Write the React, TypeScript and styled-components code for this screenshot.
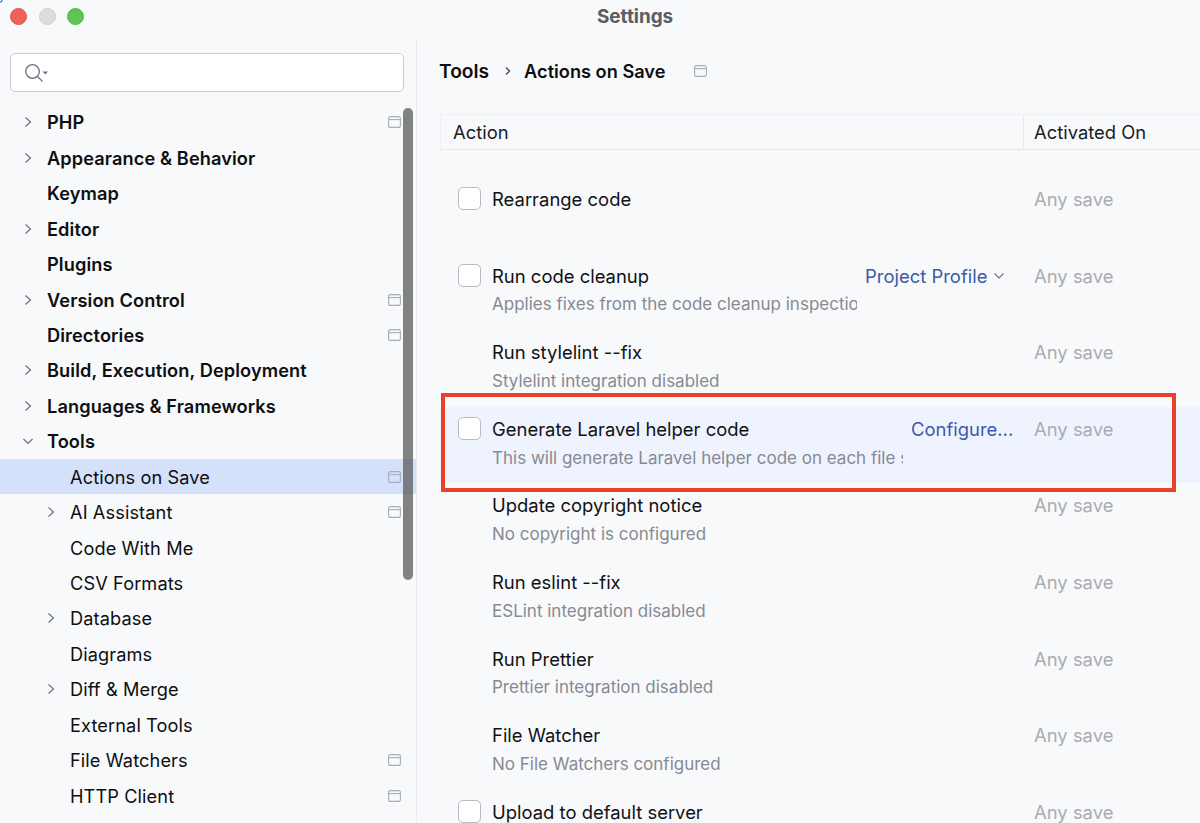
import React from "react";
import styled, { createGlobalStyle } from "styled-components";

const Global = createGlobalStyle`
  html, body { margin: 0; padding: 0; background: #f8f9fb; }
  body { font-family: Inter, "Liberation Sans", sans-serif; color: #111; overflow: hidden; }
`;

const Window = styled.div`
  position: relative;
  width: 1200px;
  height: 823px;
  overflow: hidden;
  background: #f8f9fb;
  display: flex;
  flex-direction: column;
`;

const CornerArc = styled.span`
  position: absolute;
  left: -5px;
  top: -5px;
  width: 8px;
  height: 8px;
  box-sizing: border-box;
  border: 1.5px solid #2b3f8f;
  border-radius: 50%;
`;

const TitleBar = styled.header`
  position: relative;
  height: 38px;
  flex: none;
  display: flex;
  align-items: flex-start;
  padding: 8px 0 0 10px;
  box-sizing: border-box;
  gap: 11.5px;
`;

const Light = styled.span<{ $c: string; $b: string }>`
  width: 17px;
  height: 17px;
  border-radius: 50%;
  background: ${(p) => p.$c};
  border: 1px solid ${(p) => p.$b};
  box-sizing: border-box;
`;

const Title = styled.div`
  position: absolute;
  left: 597px;
  top: 6px;
  font-size: 18.9px;
  line-height: 22px;
  font-weight: 700;
  color: #5c5d62;
`;

const Body = styled.div`
  flex: 1;
  display: flex;
  min-height: 0;
`;

const Sidebar = styled.aside`
  position: relative;
  width: 417px;
  flex: none;
  box-sizing: border-box;
  border-right: 1px solid #ebecf0;
  padding-top: 15px;
`;

const Search = styled.div`
  margin: 0 12px 0 10px;
  height: 39px;
  box-sizing: border-box;
  background: #fff;
  border: 1.5px solid #c9ccd6;
  border-radius: 5px;
  display: flex;
  align-items: center;
  padding-left: 13px;
`;

const Tree = styled.ul`
  list-style: none;
  margin: 12.6px 0 0;
  padding: 0;
`;

const Row = styled.li<{ $sel?: boolean }>`
  position: relative;
  height: 35.45px;
  display: flex;
  align-items: center;
  background: ${(p) => (p.$sel ? "#d5e1fb" : "transparent")};
`;

const Arrow = styled.span<{ $level: number }>`
  width: 14px;
  height: 14px;
  flex: none;
  margin-left: ${(p) => (p.$level ? 44 : 21)}px;
  margin-right: 12px;
  display: flex;
  align-items: center;
  justify-content: center;
`;

const Label = styled.span<{ $bold?: boolean }>`
  font-size: 18.2px;
  letter-spacing: 0.1px;
  font-weight: ${(p) => (p.$bold ? 600 : 400)};
  color: #0e0f11;
  white-space: nowrap;
`;

const ProjectMark = styled.svg`
  position: absolute;
  right: 15px;
  top: 50%;
  margin-top: -6px;
  width: 13px;
  height: 12px;
`;

const Scrollbar = styled.div`
  position: absolute;
  left: 403px;
  top: 70px;
  width: 10px;
  height: 472px;
  border-radius: 5px;
  background: rgba(90, 90, 90, 0.75);
`;

const Main = styled.main`
  flex: 1;
  min-width: 0;
  padding: 0 0 0 22px;
`;

const Crumbs = styled.div`
  height: 36px;
  margin-top: 15px;
  display: flex;
  align-items: center;
  font-size: 18.2px;
  font-weight: 600;
  color: #0e0f11;
`;

const CrumbHome = styled.span`
  font-size: 19.2px;
`;

const CrumbSep = styled.span`
  margin: 0 12px 0 15px;
  display: flex;
  align-items: center;
`;

const CrumbMark = styled.svg`
  width: 13px;
  height: 12px;
  margin-left: 29px;
`;

const TableHead = styled.div`
  margin: 25px 0 0 1px;
  height: 34px;
  display: grid;
  grid-template-columns: 582px 1fr;
  border-top: 1px solid #f0f1f4;
  border-bottom: 1px solid #e6e8ec;
  border-left: 1px solid #f0f1f4;
`;

const HeadCell = styled.div<{ $divide?: boolean }>`
  display: flex;
  align-items: center;
  font-size: 18.4px;
  color: #1b1c1f;
  padding-left: ${(p) => (p.$divide ? 10 : 12)}px;
  border-left: ${(p) => (p.$divide ? "1px solid #e6e8ec" : "none")};
`;

const Rows = styled.div`
  padding-top: 27px;
`;

const ActionRow = styled.div<{ $hi?: boolean }>`
  height: 76.6px;
  display: grid;
  grid-template-columns: 52px 1fr 176px;
  align-items: start;
  box-sizing: border-box;
  background: ${(p) => (p.$hi ? "#eff3fd" : "transparent")};
  margin-left: 1px;
`;

const CheckCell = styled.div`
  padding: 10px 0 0 18px;
`;

const Check = styled.span`
  display: block;
  width: 23px;
  height: 23px;
  box-sizing: border-box;
  background: #fff;
  border: 1.5px solid #b8bac2;
  border-radius: 5px;
`;

const Texts = styled.div`
  position: relative;
  min-width: 0;
  padding-top: 11px;
`;

const Name = styled.div`
  font-size: 18.45px;
  line-height: 23px;
  color: #111215;
  white-space: nowrap;
`;

const Sub = styled.div<{ $w?: number }>`
  margin-top: 5.8px;
  font-size: 17px;
  line-height: 23px;
  color: #868a93;
  white-space: nowrap;
  overflow: hidden;
  width: ${(p) => (p.$w ? `${p.$w}px` : "auto")};
`;

const LinkButton = styled.span`
  position: absolute;
  top: 11px;
  font-size: 18.45px;
  line-height: 23px;
  color: #3b5aa8;
  white-space: nowrap;
  display: flex;
  align-items: center;
  gap: 6px;
`;

const Activated = styled.div`
  padding: 11px 0 0 10px;
  font-size: 18.45px;
  line-height: 23px;
  color: #a9acb4;
  white-space: nowrap;
`;

const Annotation = styled.div`
  position: absolute;
  left: 441px;
  top: 393px;
  width: 735px;
  height: 99px;
  box-sizing: border-box;
  border: 4px solid #e8412a;
  pointer-events: none;
`;

const Chevron = ({ open }: { open?: boolean }) =>
  open ? (
    <svg width="14" height="14" viewBox="0 0 14 14" fill="none" stroke="#6c707e" strokeWidth="1.2">
      <path d="M2.5 5l4.5 4.5L11.5 5" />
    </svg>
  ) : (
    <svg width="14" height="14" viewBox="0 0 14 14" fill="none" stroke="#6c707e" strokeWidth="1.2">
      <path d="M4.5 2.5L9.5 7l-5 4.5" />
    </svg>
  );

const markPath = (
  <>
    <rect x="0.6" y="0.6" width="11.8" height="10.8" rx="2" />
    <path d="M0.6 3.6h11.8" />
  </>
);

type Item = { t: string; lvl?: 1; arrow?: "r" | "d"; mark?: boolean; sel?: boolean };

const items: Item[] = [
  { t: "PHP", arrow: "r", mark: true },
  { t: "Appearance & Behavior", arrow: "r" },
  { t: "Keymap" },
  { t: "Editor", arrow: "r" },
  { t: "Plugins" },
  { t: "Version Control", arrow: "r", mark: true },
  { t: "Directories", mark: true },
  { t: "Build, Execution, Deployment", arrow: "r" },
  { t: "Languages & Frameworks", arrow: "r" },
  { t: "Tools", arrow: "d" },
  { t: "Actions on Save", lvl: 1, mark: true, sel: true },
  { t: "AI Assistant", lvl: 1, arrow: "r", mark: true },
  { t: "Code With Me", lvl: 1 },
  { t: "CSV Formats", lvl: 1 },
  { t: "Database", lvl: 1, arrow: "r" },
  { t: "Diagrams", lvl: 1 },
  { t: "Diff & Merge", lvl: 1, arrow: "r" },
  { t: "External Tools", lvl: 1 },
  { t: "File Watchers", lvl: 1, mark: true },
  { t: "HTTP Client", lvl: 1, mark: true },
];

type Act = {
  name: string;
  sub?: string;
  check?: boolean;
  subW?: number;
  hi?: boolean;
  link?: { text: string; left: number; chevron?: boolean };
};

const actions: Act[] = [
  { name: "Rearrange code", check: true },
  {
    name: "Run code cleanup",
    check: true,
    sub: "Applies fixes from the code cleanup inspections",
    subW: 365,
    link: { text: "Project Profile", left: 373, chevron: true },
  },
  { name: "Run stylelint --fix", sub: "Stylelint integration disabled" },
  {
    name: "Generate Laravel helper code",
    check: true,
    hi: true,
    sub: "This will generate Laravel helper code on each file save",
    subW: 411,
    link: { text: "Configure...", left: 419 },
  },
  { name: "Update copyright notice", sub: "No copyright is configured" },
  { name: "Run eslint --fix", sub: "ESLint integration disabled" },
  { name: "Run Prettier", sub: "Prettier integration disabled" },
  { name: "File Watcher", sub: "No File Watchers configured" },
  { name: "Upload to default server", check: true },
];

export default function App() {
  return (
    <Window>
      <Global />
      <CornerArc />
      <TitleBar>
        <Light $c="#f2605a" $b="#e5534c" />
        <Light $c="#dcdcdc" $b="#d0d0d0" />
        <Light $c="#5fc454" $b="#55b84a" />
        <Title>Settings</Title>
      </TitleBar>
      <Body>
        <Sidebar>
          <Search>
            <svg width="28" height="20" viewBox="0 0 28 20" fill="none">
              <circle cx="8.5" cy="8.5" r="6.8" stroke="#6c707e" strokeWidth="1.3" />
              <path d="M13.5 13.5L18.5 18.5" stroke="#6c707e" strokeWidth="1.3" />
              <path d="M18.5 8.5h5.5l-2.75 3z" fill="#6c707e" />
            </svg>
          </Search>
          <Tree>
            {items.map((it) => (
              <Row key={it.t} $sel={it.sel}>
                <Arrow $level={it.lvl ?? 0}>
                  {it.arrow && <Chevron open={it.arrow === "d"} />}
                </Arrow>
                <Label $bold={!it.lvl}>{it.t}</Label>
                {it.mark && (
                  <ProjectMark viewBox="0 0 13 12" fill="none" stroke="#a8adbd" strokeWidth="1.1">
                    {markPath}
                  </ProjectMark>
                )}
              </Row>
            ))}
          </Tree>
          <Scrollbar />
        </Sidebar>
        <Main>
          <Crumbs>
            <CrumbHome>Tools</CrumbHome>
            <CrumbSep>
              <svg width="8" height="12" viewBox="0 0 8 12" fill="none" stroke="#44464c" strokeWidth="1.3">
                <path d="M2 2.5L5.5 6 2 9.5" />
              </svg>
            </CrumbSep>
            <span>Actions on Save</span>
            <CrumbMark viewBox="0 0 13 12" fill="none" stroke="#a8adbd" strokeWidth="1.1">
              {markPath}
            </CrumbMark>
          </Crumbs>
          <TableHead>
            <HeadCell>Action</HeadCell>
            <HeadCell $divide>Activated On</HeadCell>
          </TableHead>
          <Rows>
            {actions.map((a) => (
              <ActionRow key={a.name} $hi={a.hi}>
                <CheckCell>{a.check && <Check />}</CheckCell>
                <Texts>
                  <Name>{a.name}</Name>
                  {a.sub && <Sub $w={a.subW}>{a.sub}</Sub>}
                  {a.link && (
                    <LinkButton style={{ left: a.link.left }}>
                      {a.link.text}
                      {a.link.chevron && (
                        <svg width="12" height="8" viewBox="0 0 12 8" fill="none" stroke="#6c707e" strokeWidth="1.1">
                          <path d="M1.5 1.5L6 6l4.5-4.5" />
                        </svg>
                      )}
                    </LinkButton>
                  )}
                </Texts>
                <Activated>Any save</Activated>
              </ActionRow>
            ))}
          </Rows>
        </Main>
      </Body>
      <Annotation />
    </Window>
  );
}
